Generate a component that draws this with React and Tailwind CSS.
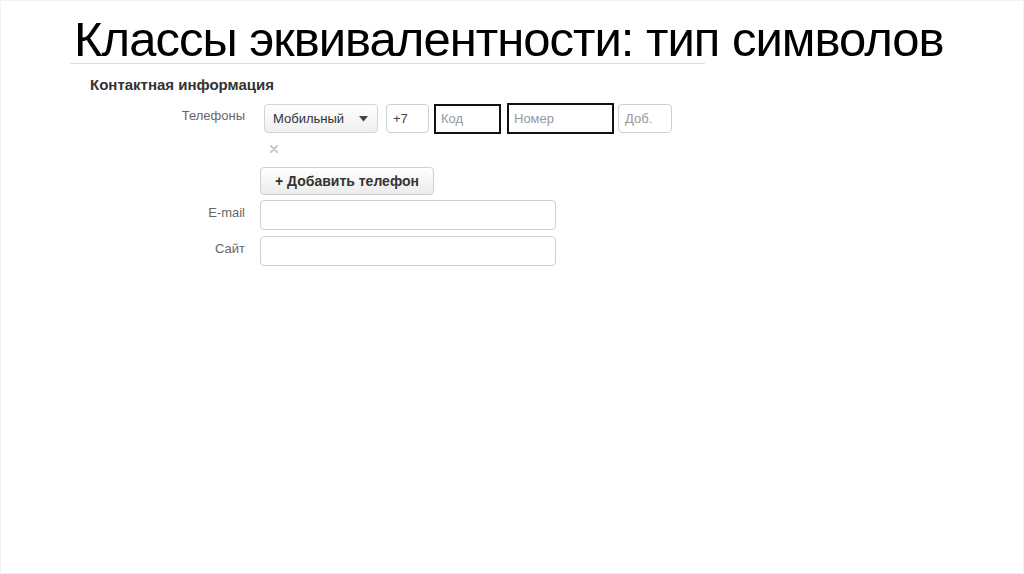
import React from 'react';

const inputBase = 'h-[29px] rounded-[4px] border border-[#cfcfcf] bg-white px-[6px] text-[13px] flex items-center';

const FieldRow = ({ label, children, className = '' }) => (
  <div className={`flex items-start ${className}`}>
    <div className="w-[176px] shrink-0 pr-[1px] text-right text-[13px] leading-none text-[#666] pt-[6px]">{label}</div>
    <div className="ml-[14px]">{children}</div>
  </div>
);

const App = () => {
  return (
    <div
      className="w-[1024px] h-[574px] bg-white border border-[#f2f2f2] overflow-hidden"
      style={{ fontFamily: '"Liberation Sans", Arial, sans-serif' }}
    >
      <h1 className="pl-[73px] pt-[13px] text-[49px] leading-[50px] text-black font-normal whitespace-nowrap tracking-[-1px]">
        Классы эквивалентности: тип символов
      </h1>
      <div className="ml-[69px] mt-[-1px] w-[635px] h-px bg-[#dedede]" />

      <div className="pl-[69px]">
        <div className="pl-[20px] pt-[13px] text-[15px] font-bold leading-none text-[#333]">
          Контактная информация
        </div>

        <FieldRow label="Телефоны" className="mt-[11px]">
          <div className="flex items-center ml-[4px]">
            <div className="h-[29px] w-[114px] rounded-[4px] border border-[#d4d4d4] bg-gradient-to-b from-white to-[#efefef] flex items-center justify-between pl-[8px] pr-[9px] text-[13px] text-[#333]">
              <span>Мобильный</span>
              <svg width="9" height="6" viewBox="0 0 9 6"><path d="M0 0h9L4.5 5.5z" fill="#444" /></svg>
            </div>
            <div className={`${inputBase} ml-[8px] w-[43px] text-[#444]`}>+7</div>
            <div className="ml-[5px] h-[30px] w-[67px] border-2 border-[#111] px-[5px] text-[13px] text-[#999] flex items-center">Код</div>
            <div className="ml-[6px] h-[31px] w-[107px] border-2 border-[#111] px-[5px] text-[13px] text-[#999] flex items-center">Номер</div>
            <div className={`${inputBase} ml-[4px] w-[54px] text-[#999]`}>Доб.</div>
          </div>
          <div className="ml-[10px] mt-[10px] h-[9px] flex items-center">
            <svg width="8" height="8" viewBox="0 0 8 8">
              <path d="M1 1l6 6M7 1L1 7" stroke="#c8c8c8" strokeWidth="2" strokeLinecap="round" />
            </svg>
          </div>
        </FieldRow>

        <div className="ml-[190px] mt-[14px]">
          <button className="h-[28px] w-[174px] rounded-[4px] border border-[#d0d0d0] bg-gradient-to-b from-white to-[#ececec] text-[14px] font-bold text-[#333] flex items-center justify-center">
            + Добавить телефон
          </button>
        </div>

        <FieldRow label="E-mail" className="mt-[5px]">
          <div className="h-[30px] w-[296px] rounded-[4px] border border-[#cfcfcf] bg-white" />
        </FieldRow>

        <FieldRow label="Сайт" className="mt-[6px]">
          <div className="h-[30px] w-[296px] rounded-[4px] border border-[#cfcfcf] bg-white" />
        </FieldRow>
      </div>
    </div>
  );
};

export default App;
